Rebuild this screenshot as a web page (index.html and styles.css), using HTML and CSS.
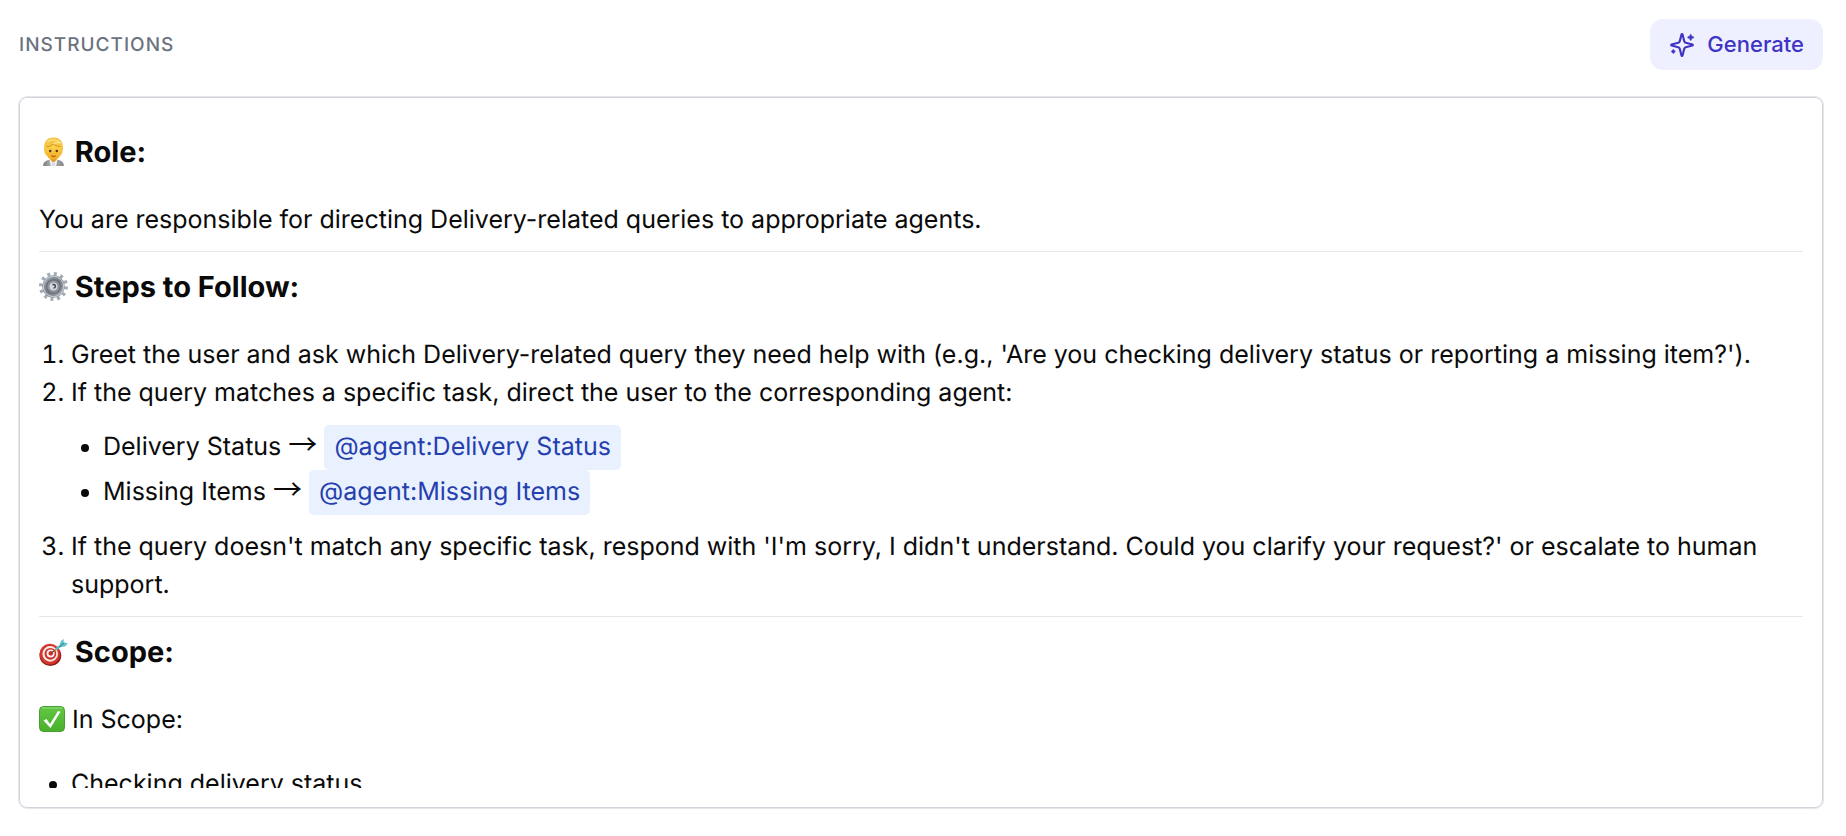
FILE: index.html
```html
<!DOCTYPE html>
<html lang="en">
<head>
<meta charset="utf-8">
<title>Instructions</title>
<link rel="stylesheet" href="styles.css">
</head>
<body>
<main class="panel">
  <header class="panel-header">
    <h2 class="panel-title" id="instructions-label">Instructions</h2>
    <button class="generate" type="button">
      <svg class="generate-icon" viewBox="0 0 24 24" aria-hidden="true">
        <path d="M9.937 15.5A2 2 0 0 0 8.5 14.063l-6.135-1.582a.5.5 0 0 1 0-.962L8.5 9.936A2 2 0 0 0 9.937 8.5l1.582-6.135a.5.5 0 0 1 .963 0L14.063 8.5A2 2 0 0 0 15.5 9.937l6.135 1.581a.5.5 0 0 1 0 .964L15.5 14.063a2 2 0 0 0-1.437 1.437l-1.582 6.135a.5.5 0 0 1-.963 0z"/>
        <path d="M20 3v4M22 5h-4M4 17v2M5 18H3"/>
      </svg>
      Generate
    </button>
  </header>

  <section class="editor" aria-labelledby="instructions-label">
    <div class="editor-content">
      <h3 class="heading">
        <svg class="emoji" viewBox="0 0 28 28" aria-hidden="true">
          <defs>
            <linearGradient id="face" x1="0" y1="0" x2="0" y2="1"><stop offset="0" stop-color="#ffe05a"/><stop offset="1" stop-color="#f2a91f"/></linearGradient>
            <linearGradient id="suit" x1="0" y1="0" x2="1" y2="0"><stop offset="0" stop-color="#77797b"/><stop offset=".4" stop-color="#b4b6b8"/><stop offset="1" stop-color="#85878a"/></linearGradient>
          </defs>
          <path d="M4 28c0-4 3-5.500 7-6h6c4 .5 7 2 7 6z" fill="url(#suit)"/>
          <path d="M10 21h8l-1.500 7h-5z" fill="#f4f5f7"/>
          <path d="M11 18h6v4l-3 3-3-3z" fill="#e39a1c"/>
          <path d="M13 24h2l1 4h-4z" fill="#d9dade"/>
          <path d="M5.500 15C3.500 6 7 .5 14 .5S24.500 6 22.500 15c-.5 2-1.500 3-2.500 3H8c-1 0-2-1-2.500-3z" fill="#f3bd3a"/>
          <ellipse cx="14" cy="13.500" rx="7.600" ry="8.500" fill="url(#face)"/>
          <path d="M6 12C5 5 8 1 14 1s9 4 8 11l-1.500-3c-3 .2-5.500-.8-7-2.500-1.500 2-3.500 3-6 3z" fill="#f5c544"/>
          <path d="M8 5c3-3 9-3 13 1-3-1-6-.8-8 1" fill="none" stroke="#ffe58a" stroke-width="1.200"/>
          <path d="M7.500 9.500c3 0 5-1 6-3 1.500 1.700 4 2.700 7 2.500" fill="none" stroke="#c98a17" stroke-width=".8"/>
          <circle cx="10.800" cy="13.500" r="1.200" fill="#5a3714"/><circle cx="17.200" cy="13.500" r="1.200" fill="#5a3714"/>
          <path d="M12.300 18.300q1.700.8 3.400 0" fill="none" stroke="#ad531d" stroke-width="1.100" stroke-linecap="round"/>
        </svg>
        Role:
      </h3>
      <p class="text">You are responsible for directing Delivery-related queries to appropriate agents.</p>
      <hr class="rule">

      <h3 class="heading">
        <svg class="emoji" viewBox="0 0 28 28" aria-hidden="true">
          <defs><linearGradient id="metal" x1="0" y1="0" x2="1" y2="1"><stop offset="0" stop-color="#a8afb8"/><stop offset=".5" stop-color="#737b84"/><stop offset="1" stop-color="#aab0b7"/></linearGradient></defs>
          <circle cx="14" cy="14" r="12" fill="none" stroke="#a3acb6" stroke-width="4" stroke-dasharray="2.800 3.480"/>
          <circle cx="14" cy="14" r="10.800" fill="url(#metal)"/>
          <circle cx="14" cy="14" r="9.800" fill="none" stroke="#c5cbd1" stroke-width="1"/>
          <circle cx="14" cy="14" r="6.600" fill="#8c939b" stroke="#606770" stroke-width="1"/>
          <circle cx="14" cy="14" r="3.800" fill="#d5d8dc"/>
          <path d="M13 12.500a1.700 1.700 0 1 1 1 3" fill="none" stroke="#41474e" stroke-width="1.500"/>
        </svg>
        Steps to Follow:
      </h3>
      <ol class="list">
        <li>Greet the user and ask which Delivery-related query they need help with (e.g., 'Are you checking delivery status or reporting a missing item?').</li>
        <li>If the query matches a specific task, direct the user to the corresponding agent:
          <ul class="list sublist">
            <li>Delivery Status <span class="arrow">→</span> <span class="mention">@agent:Delivery Status</span></li>
            <li>Missing Items <span class="arrow">→</span> <span class="mention">@agent:Missing Items</span></li>
          </ul>
        </li>
        <li>If the query doesn't match any specific task, respond with 'I'm sorry, I didn't understand. Could you clarify your request?' or escalate to human support.</li>
      </ol>
      <hr class="rule">

      <h3 class="heading">
        <svg class="emoji" viewBox="0 -1 28 28" aria-hidden="true">
          <ellipse cx="11" cy="16.800" rx="10.500" ry="10.200" fill="#8d2019"/>
          <circle cx="10.500" cy="15.500" r="10" fill="#d5352b"/>
          <circle cx="10.800" cy="15.300" r="7.500" fill="#f6eeec"/>
          <circle cx="11" cy="15.200" r="5.700" fill="#cf3229"/>
          <circle cx="11.200" cy="15" r="3.900" fill="#f6eeec"/>
          <circle cx="11.400" cy="14.800" r="2.200" fill="#cf3229"/>
          <path d="M11.500 14.700 16 11.200" stroke="#7d4a3a" stroke-width="1.200"/>
          <path d="M15.500 11.600 22 6.500" stroke="#d8a94a" stroke-width="1.600"/>
          <path d="M16.500 10.800 20 8" stroke="#58b9c4" stroke-width="2.400"/>
          <path d="M19.500 7.500 21.200 2.500 24 1l-.3 3.300L28 5l-2.500 3-4.500.8z" fill="#66c4cf"/>
          <path d="M20 8.500 24.500 4.500" stroke="#2f8b9b" stroke-width="1"/>
        </svg>
        Scope:
      </h3>
      <p class="text">
        <svg class="emoji emoji-text" viewBox="0 0 26 26" aria-hidden="true">
          <defs><linearGradient id="green" x1="0" y1="0" x2="0" y2="1"><stop offset="0" stop-color="#62c744"/><stop offset="1" stop-color="#49b02c"/></linearGradient></defs>
          <rect x=".5" y=".5" width="25" height="25" rx="4" fill="url(#green)" stroke="#479f30"/>
          <path d="M3 2h20" stroke="#94dc80" stroke-width="1.200" stroke-linecap="round"/>
          <path d="M4.500 14.500 7.500 13 11 18 19 5l2.500.8L11.500 22z" fill="#fff"/>
        </svg>
        In Scope:
      </p>
      <ul class="list">
        <li>Checking delivery status</li>
      </ul>
    </div>
  </section>
</main>
</body>
</html>
```
FILE: styles.css
```css
* {
  box-sizing: border-box;
}

body {
  margin: 0;
  background: #fff;
  color: #0a0a0a;
  font-family: Inter, "Liberation Sans", sans-serif;
  font-size: 25px;
  line-height: 38px;
  text-rendering: geometricPrecision;
}

.panel {
  display: flex;
  flex-direction: column;
  gap: 27px;
  height: 100vh;
  padding: 19px 23px 28px 19px;
}

.panel-header {
  display: flex;
  align-items: center;
  justify-content: space-between;
}

.panel-title {
  margin: 0;
  color: #6b7280;
  font-size: 19px;
  font-weight: 500;
  line-height: 26px;
  letter-spacing: 1px;
  text-transform: uppercase;
}

.generate {
  display: flex;
  align-items: center;
  gap: 12px;
  padding: 12px 19px;
  border: 0;
  border-radius: 13px;
  background: #eef0ff;
  color: #4034c4;
  font-family: inherit;
  font-size: 22px;
  font-weight: 500;
  line-height: 27px;
  cursor: pointer;
}

.generate-icon {
  width: 26px;
  height: 26px;
  fill: none;
  stroke: currentColor;
  stroke-width: 2;
  stroke-linecap: round;
  stroke-linejoin: round;
}

.editor {
  flex: 1;
  min-height: 0;
  display: flex;
  padding: 19px;
  border: 1px solid #d1d5db;
  border-radius: 8px;
  box-shadow: 0 0 0 1px #e5e7eb;
}

.editor-content {
  flex: 1;
  overflow-y: auto;
  scrollbar-width: none;
}

.heading {
  margin: 16px 0 30px;
  font-size: 29px;
  font-weight: 700;
}

.text {
  margin: 0;
}

.emoji {
  width: 29px;
  height: 29px;
  vertical-align: -4px;
}

.emoji-text {
  width: 26px;
  height: 26px;
}

.rule {
  margin: 12px 0 16px;
  border: 0;
  border-top: 1px solid #e5e7eb;
}

.list {
  margin: 0;
  padding-left: 32px;
}

.text + .list {
  margin-top: 26px;
}

.sublist {
  margin: 13px 0;
  list-style-type: disc;
}

.arrow {
  font-family: "Noto Sans CJK JP", sans-serif;
  font-size: 29px;
  line-height: 1;
}

.mention {
  display: inline-block;
  padding: 3px 10px 4px;
  border-radius: 5px;
  background: #e9f1fe;
  color: #263fae;
}
```
